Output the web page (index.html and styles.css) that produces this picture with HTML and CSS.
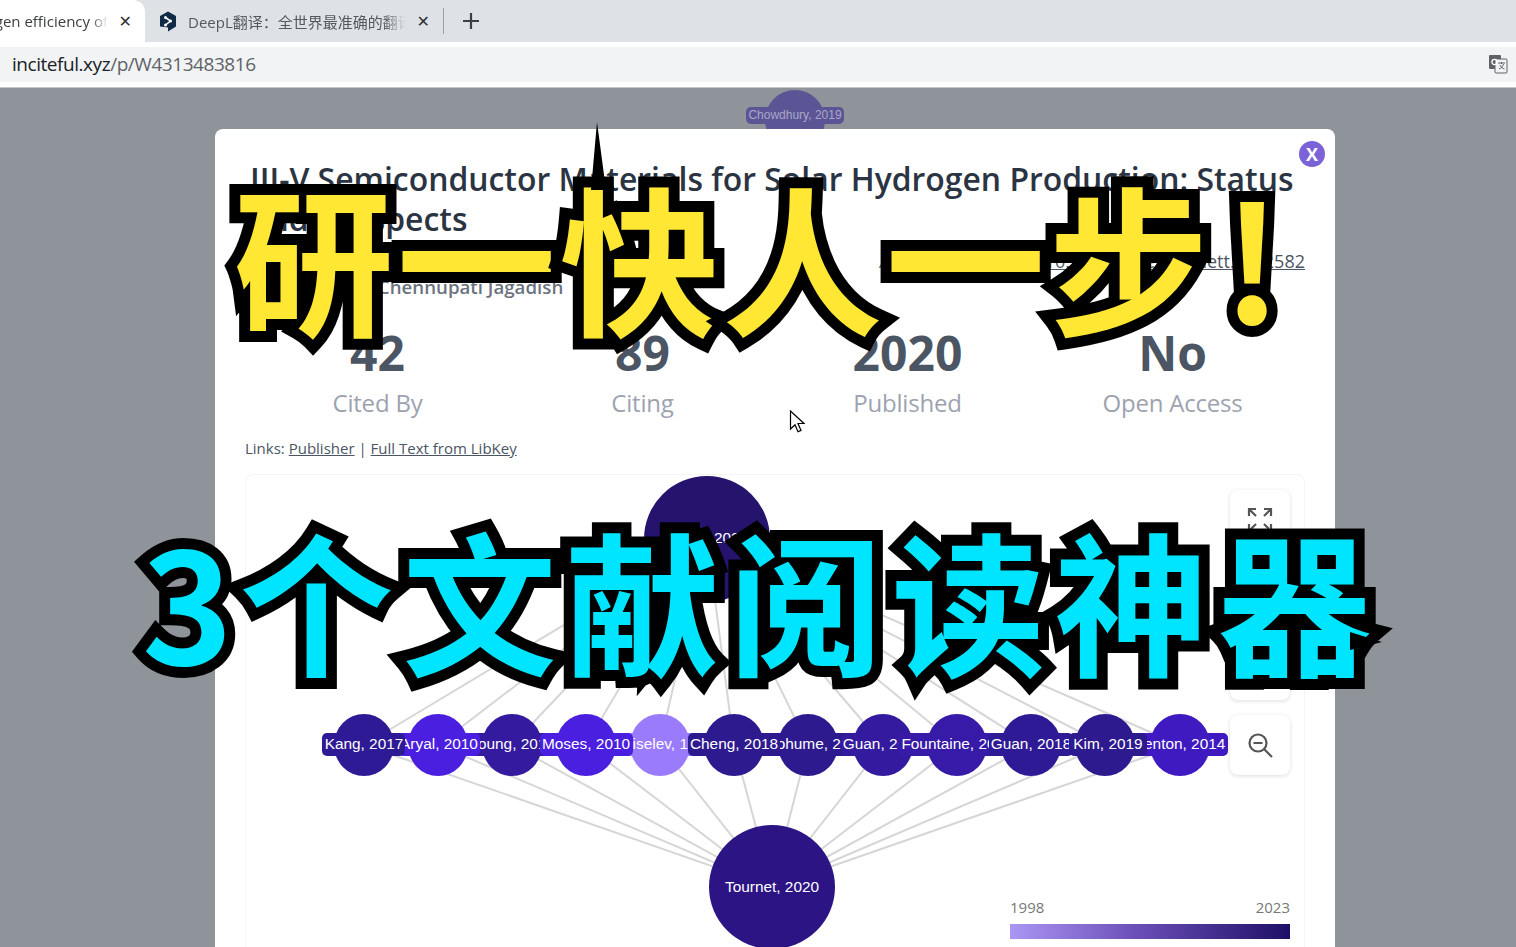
FILE: index.html
```html
<!DOCTYPE html>
<html lang="zh">
<head>
<meta charset="utf-8">
<title>inciteful.xyz</title>
<link rel="stylesheet" href="styles.css">
</head>
<body>
<header class="chrome">
  <div class="tabs">
    <div class="tab tab-active">
      <span class="tab-text tab-text-clip">gen efficiency of</span>
      <span class="tab-x">✕</span>
    </div>
    <div class="tab tab-idle">
      <svg class="deepl" width="18" height="21" viewBox="0 0 18 21"><path d="M9 0.5 17 5v10.500L9 20.500V16.500L1 15.500V5z" fill="#0f2b46"/><path d="M6.500 6.500 11.500 10 6.500 14" fill="none" stroke="#fff" stroke-width="1.600"/><circle cx="6.500" cy="6.500" r="1.500" fill="#fff"/><circle cx="11.500" cy="10" r="1.500" fill="#fff"/><circle cx="6.500" cy="14" r="1.500" fill="#fff"/></svg>
      <span class="tab-text tab-text-deepl">DeepL翻译：全世界最准确的翻译</span>
      <span class="tab-x">✕</span>
    </div>
    <span class="tab-sep"></span>
    <svg class="tab-plus" width="16" height="16" viewBox="0 0 16 16"><path d="M8 0v16M0 8h16" stroke="#3c4043" stroke-width="2.200"/></svg>
  </div>
  <div class="address">
    <div class="url"><span class="url-host">inciteful.xyz</span><span class="url-path">/p/W4313483816</span></div>
    <svg class="translate" width="20" height="20" viewBox="0 0 20 20"><rect x="1" y="1" width="12" height="14" rx="1" fill="#5f6368"/><rect x="7" y="5" width="12" height="14" rx="1" fill="#f1f3f4" stroke="#5f6368"/><circle cx="6.500" cy="8" r="2.600" fill="none" stroke="#fff" stroke-width="1.300"/><path d="M10 9h7M13.500 8v2M11 15c2.500-1 4-3 4.500-5M12 11c.8 2 2.500 3.500 4.500 4" fill="none" stroke="#5f6368"/></svg>
  </div>
</header>

<main class="stage">
  <div class="bg-node"><span class="bg-node-label">Chowdhury, 2019</span></div>

  <section class="modal">
    <button class="close">X</button>
    <h1 class="title">III-V Semiconductor Materials for Solar Hydrogen Production: Status and Prospects</h1>
    <div class="meta">
      <p class="authors">Joshua Tournet, Yonghwan Lee, Siva K. Karuturi, Hark Hoe Tan, Chennupati Jagadish</p>
      <p class="journal"><em>ACS Energy Letters</em> | <a href="#">10.1021/acsenergylett.0c02582</a></p>
    </div>
    <div class="stats">
      <div class="stat"><div class="stat-num">42</div><div class="stat-label">Cited By</div></div>
      <div class="stat"><div class="stat-num">89</div><div class="stat-label">Citing</div></div>
      <div class="stat"><div class="stat-num">2020</div><div class="stat-label">Published</div></div>
      <div class="stat"><div class="stat-num">No</div><div class="stat-label">Open Access</div></div>
    </div>
    <p class="links">Links: <a href="#">Publisher</a> | <a href="#">Full Text from LibKey</a></p>

    <div class="graph">
      <svg class="graph-svg" width="1060" height="473" viewBox="245 474 1060 473">
        <g class="edges">
          <path d="M364 745 707 539M438 745 707 539M512 745 707 539M586 745 707 539M660 745 707 539M734 745 707 539M808 745 707 539M883 745 707 539M957 745 707 539M1031 745 707 539M1105 745 707 539M1180 745 707 539"/>
          <path d="M364 745 772 887M438 745 772 887M512 745 772 887M586 745 772 887M660 745 772 887M734 745 772 887M808 745 772 887M883 745 772 887M957 745 772 887M1031 745 772 887M1105 745 772 887M1180 745 772 887"/>
        </g>
        <ellipse class="c-dark" cx="707" cy="539" rx="63" ry="63"/>
        <text class="label" x="707" y="543">Wang, 2021</text>
        <ellipse class="c-navy" cx="772" cy="887" rx="63" ry="62"/>
        <text class="label" x="772" y="892">Tournet, 2020</text>

        <ellipse class="c-a" cx="364" cy="745" rx="30" ry="31"/>
        <ellipse class="c-b" cx="438" cy="745" rx="30" ry="31"/>
        <ellipse class="c-c" cx="512" cy="745" rx="30" ry="31"/>
        <ellipse class="c-b" cx="586" cy="745" rx="30" ry="31"/>
        <ellipse class="c-d" cx="660" cy="745" rx="30" ry="31"/>
        <ellipse class="c-e" cx="734" cy="745" rx="30" ry="31"/>
        <ellipse class="c-e" cx="808" cy="745" rx="30" ry="31"/>
        <ellipse class="c-c" cx="883" cy="745" rx="30" ry="31"/>
        <ellipse class="c-f" cx="957" cy="745" rx="30" ry="31"/>
        <ellipse class="c-a" cx="1031" cy="745" rx="30" ry="31"/>
        <ellipse class="c-e" cx="1105" cy="745" rx="30" ry="31"/>
        <ellipse class="c-g" cx="1180" cy="745" rx="30" ry="31"/>

        <rect class="c-c" x="466" y="733" width="92" height="23" rx="5"/><text class="label" x="512" y="749">Young, 2012</text>
        <rect class="c-d" x="613" y="733" width="94" height="23" rx="5"/><text class="label" x="668" y="749">Kiselev, 1998</text>
        <rect class="c-e" x="752" y="733" width="112" height="23" rx="5"/><text class="label" x="816" y="749">Dohume, 2015</text>
        <rect class="c-g" x="1132" y="733" width="96" height="23" rx="5"/><text class="label" x="1180" y="749">Fenton, 2014</text>
        <rect class="c-c" x="841" y="733" width="84" height="23" rx="5"/><text class="label" x="883" y="749">Guan, 2018</text>
        <rect class="c-f" x="898" y="733" width="116" height="23" rx="5"/><text class="label" x="957" y="749">Fountaine, 2016</text>
        <rect class="c-a" x="989" y="733" width="84" height="23" rx="5"/><text class="label" x="1031" y="749">Guan, 2018</text>
        <rect class="c-e" x="1069" y="733" width="78" height="23" rx="5"/><text class="label" x="1108" y="749">Kim, 2019</text>
        <rect class="c-b" x="398" y="733" width="82" height="23" rx="5"/><text class="label" x="439" y="749">Aryal, 2010</text>
        <rect class="c-a" x="322" y="733" width="83" height="23" rx="5"/><text class="label" x="364" y="749">Kang, 2017</text>
        <rect class="c-b" x="540" y="733" width="93" height="23" rx="5"/><text class="label" x="586" y="749">Moses, 2010</text>
        <rect class="c-e" x="688" y="733" width="92" height="23" rx="5"/><text class="label" x="734" y="749">Cheng, 2018</text>
      </svg>

      <div class="controls">
        <button class="ctl">
          <svg width="26" height="26" viewBox="0 0 26 26"><path d="M2 9V2h7M2 2l7 7M24 9V2h-7M24 2l-7 7M2 17v7h7M2 24l7-7M24 17v7h-7M24 24l-7-7" fill="none" stroke="#555" stroke-width="2.200"/></svg>
        </button>
        <button class="ctl">
          <svg width="26" height="26" viewBox="0 0 26 26"><path d="M3 3h20v20H3z" fill="none" stroke="#555" stroke-width="2"/></svg>
        </button>
        <button class="ctl">
          <svg width="26" height="26" viewBox="0 0 26 26"><circle cx="11" cy="11" r="8.500" fill="none" stroke="#555" stroke-width="2.200"/><path d="M6.500 11h9M11 6.500v9M17 17l8 8" fill="none" stroke="#555" stroke-width="2.200"/></svg>
        </button>
        <button class="ctl">
          <svg width="26" height="26" viewBox="0 0 26 26"><circle cx="11" cy="11" r="8.500" fill="none" stroke="#555" stroke-width="2.200"/><path d="M6.500 11h9M17 17l8 8" fill="none" stroke="#555" stroke-width="2.200"/></svg>
        </button>
      </div>

      <div class="legend">
        <div class="legend-years"><span>1998</span><span>2023</span></div>
        <div class="legend-bar"></div>
      </div>
    </div>
  </section>

  <svg class="cursor" width="16" height="24" viewBox="0 0 16 24"><path d="M1.500 1v18l4.500-4.300 3 7 3-1.300-3-6.900h6z" fill="#fff" stroke="#000" stroke-width="1.200"/></svg>
</main>

<div class="caption caption-one">
  <span class="ch ch-w">研</span><span class="ch ch-w">一</span><span class="ch ch-w">快</span><span class="ch ch-w">人</span><span class="ch ch-w">一</span><span class="ch ch-w">步</span><span class="ch ch-n">!</span>
</div>
<div class="caption caption-two">
  <span class="ch ch-three">3</span><span class="ch ch-x">个</span><span class="ch ch-x">文</span><span class="ch ch-x">献</span><span class="ch ch-x">阅</span><span class="ch ch-x">读</span><span class="ch ch-x">神</span><span class="ch ch-x">器</span>
</div>
<svg class="spikes" width="1516" height="947" viewBox="0 0 1516 947"><path d="M597 122 591 190H606zM1350 632 1382 642 1350 650z" fill="#000"/></svg>
</body>
</html>
```
FILE: styles.css
```css
* { box-sizing: border-box; }
html, body { margin: 0; height: 947px; overflow: hidden; }
body {
  position: relative;
  display: flex;
  flex-direction: column;
  width: 1516px;
  font-family: "Open Sans", "Noto Sans CJK SC", sans-serif;
  background: #8f949b;
}

/* browser chrome */
.chrome { height: 88px; flex: none; background: #fff; border-bottom: 1px solid #c4c6c9; }
.tabs { display: flex; align-items: center; height: 42px; background: #dee1e6; }
.tab { display: flex; align-items: center; height: 42px; font-size: 15px; color: #3c4043; }
.tab-active { width: 145px; background: #fff; border-radius: 0 12px 0 0; padding-right: 13px; justify-content: space-between; }
.tab-idle { width: 298px; padding: 0 13px 0 14px; }
.tab-text { white-space: nowrap; overflow: hidden; }
.tab-text-clip { width: 108px; direction: rtl; text-align: left; -webkit-mask-image: linear-gradient(90deg, #000 84%, transparent 100%); mask-image: linear-gradient(90deg, #000 84%, transparent 100%); }
.tab-text-deepl { width: 218px; margin-left: 11px; color: #55585c; font-size: 15px; -webkit-mask-image: linear-gradient(90deg, #000 90%, transparent 100%); mask-image: linear-gradient(90deg, #000 90%, transparent 100%); }
.deepl { flex: none; }
.tab-x { margin-left: auto; font-size: 16px; font-weight: 700; color: #303134; font-family: "DejaVu Sans", sans-serif; }
.tab-sep { width: 1px; height: 26px; background: #9aa0a6; }
.tab-plus { margin-left: 19px; }
.address {
  display: flex; align-items: center; justify-content: space-between;
  height: 35px; margin-top: 5px; padding: 0 8px 2px 12px; background: #f1f3f4;
}
.url { font-size: 19px; letter-spacing: -0.45px; }
.url-host { color: #202124; }
.url-path { color: #5f6368; }

/* page behind */
.stage {
  position: relative;
  flex: 1;
  display: flex;
  justify-content: center;
  padding: 41px 0 0 34px;
  overflow: hidden;
  background: #8f949b;
}
.bg-node {
  position: absolute; left: 765px; top: 2px; width: 60px; height: 60px;
  border-radius: 50%; background: #5c5595;
}
.bg-node-label {
  position: absolute; left: -19px; top: 17px; width: 98px; height: 17px;
  border-radius: 5px; background: #5c5595; color: #a9a7c8;
  font: 12px/17px "Liberation Sans", sans-serif; text-align: center; white-space: nowrap;
}

/* modal */
.modal {
  position: relative;
  width: 1120px;
  height: 900px;
  flex: none;
  padding: 30px 30px 0;
  background: #fff;
  border-radius: 8px 8px 0 0;
}
.close {
  position: absolute; top: 12px; right: 10px;
  width: 26px; height: 26px; padding: 0; border: 0; border-radius: 50%;
  background: #7c62d8; color: #fff;
  font: 700 18px/26px "Open Sans", sans-serif;
}
.title {
  margin: 0; padding-left: 5px;
  font-size: 31.900px; line-height: 40px; font-weight: 600; color: #2b3442;
}
.meta { display: flex; justify-content: space-between; margin-top: 10px; }
.authors { width: 450px; margin: 0; font-size: 18.700px; line-height: 25px; font-weight: 600; color: #6b7280; }
.journal { margin: 0; font-size: 18px; line-height: 25px; color: #6b7280; text-align: right; }
.journal a, .links a { color: #4b5563; text-decoration: underline; }
.stats { display: grid; grid-template-columns: repeat(4, 1fr); margin-top: 26px; text-align: center; }
.stat-num { margin-bottom: 4px; font-size: 48px; line-height: 56px; font-weight: 700; color: #4b5563; }
.stat-label { font-size: 24px; line-height: 36px; letter-spacing: -0.2px; color: #9ca3af; }
.links { margin: 15px 0 0; font-size: 15px; line-height: 24px; color: #4b5563; }

/* graph */
.graph {
  position: relative;
  height: 473px;
  margin-top: 14px;
  border: 1px solid #f5f5f5;
  border-bottom: 0;
  border-radius: 8px 8px 0 0;
}
.graph-svg { position: absolute; left: -1px; top: -1px; }
.edges path { fill: none; stroke: #d6d6d6; stroke-width: 2; }
.label { font: 15.400px "Liberation Sans", sans-serif; fill: #fff; text-anchor: middle; }
.c-dark { fill: #26136e; }
.c-navy { fill: #2c1484; }
.c-a { fill: #2f1a96; }
.c-b { fill: #4a1fe0; }
.c-c { fill: #331a9e; }
.c-d { fill: #9a7bfb; }
.c-e { fill: #2e1a8f; }
.c-f { fill: #381aa8; }
.c-g { fill: #3e1ac0; }
.controls {
  position: absolute; top: 15px; right: 14px;
  display: flex; flex-direction: column; gap: 15px;
}
.ctl {
  display: flex; align-items: center; justify-content: center;
  width: 60px; height: 60px; padding: 0; border: 0; border-radius: 8px;
  background: #fff; box-shadow: 0 1px 4px rgba(0,0,0,.14);
}
.legend { position: absolute; left: 764px; top: 423px; width: 280px; }
.legend-years { display: flex; justify-content: space-between; font-size: 15px; line-height: 18px; color: #777; }
.legend-bar { height: 15px; margin-top: 8px; background: linear-gradient(90deg, #ab96f3, #6a4fb8 45%, #1e0f66); }

/* overlays */
.cursor { position: absolute; left: 789px; top: 322px; }
.caption {
  position: absolute;
  display: flex;
  font-family: "Noto Sans CJK SC", sans-serif;
  font-weight: 700;
  -webkit-text-stroke: 22px #000;
  paint-order: stroke fill;
  stroke-linejoin: miter;
  white-space: nowrap;
}
.caption-one { left: 232px; top: 134px; height: 240px; font-size: 160px; line-height: 240px; color: #ffe733; }
.caption-two { left: 140px; top: 478px; height: 240px; font-size: 154px; line-height: 240px; color: #00e5ff; }
.ch { display: block; text-align: center; }
.ch-w { width: 163px; }
.ch-n { width: 84px; }
.ch-three { width: 95px; }
.ch-x { width: 163px; }
.spikes { position: absolute; left: 0; top: 0; pointer-events: none; }
```
